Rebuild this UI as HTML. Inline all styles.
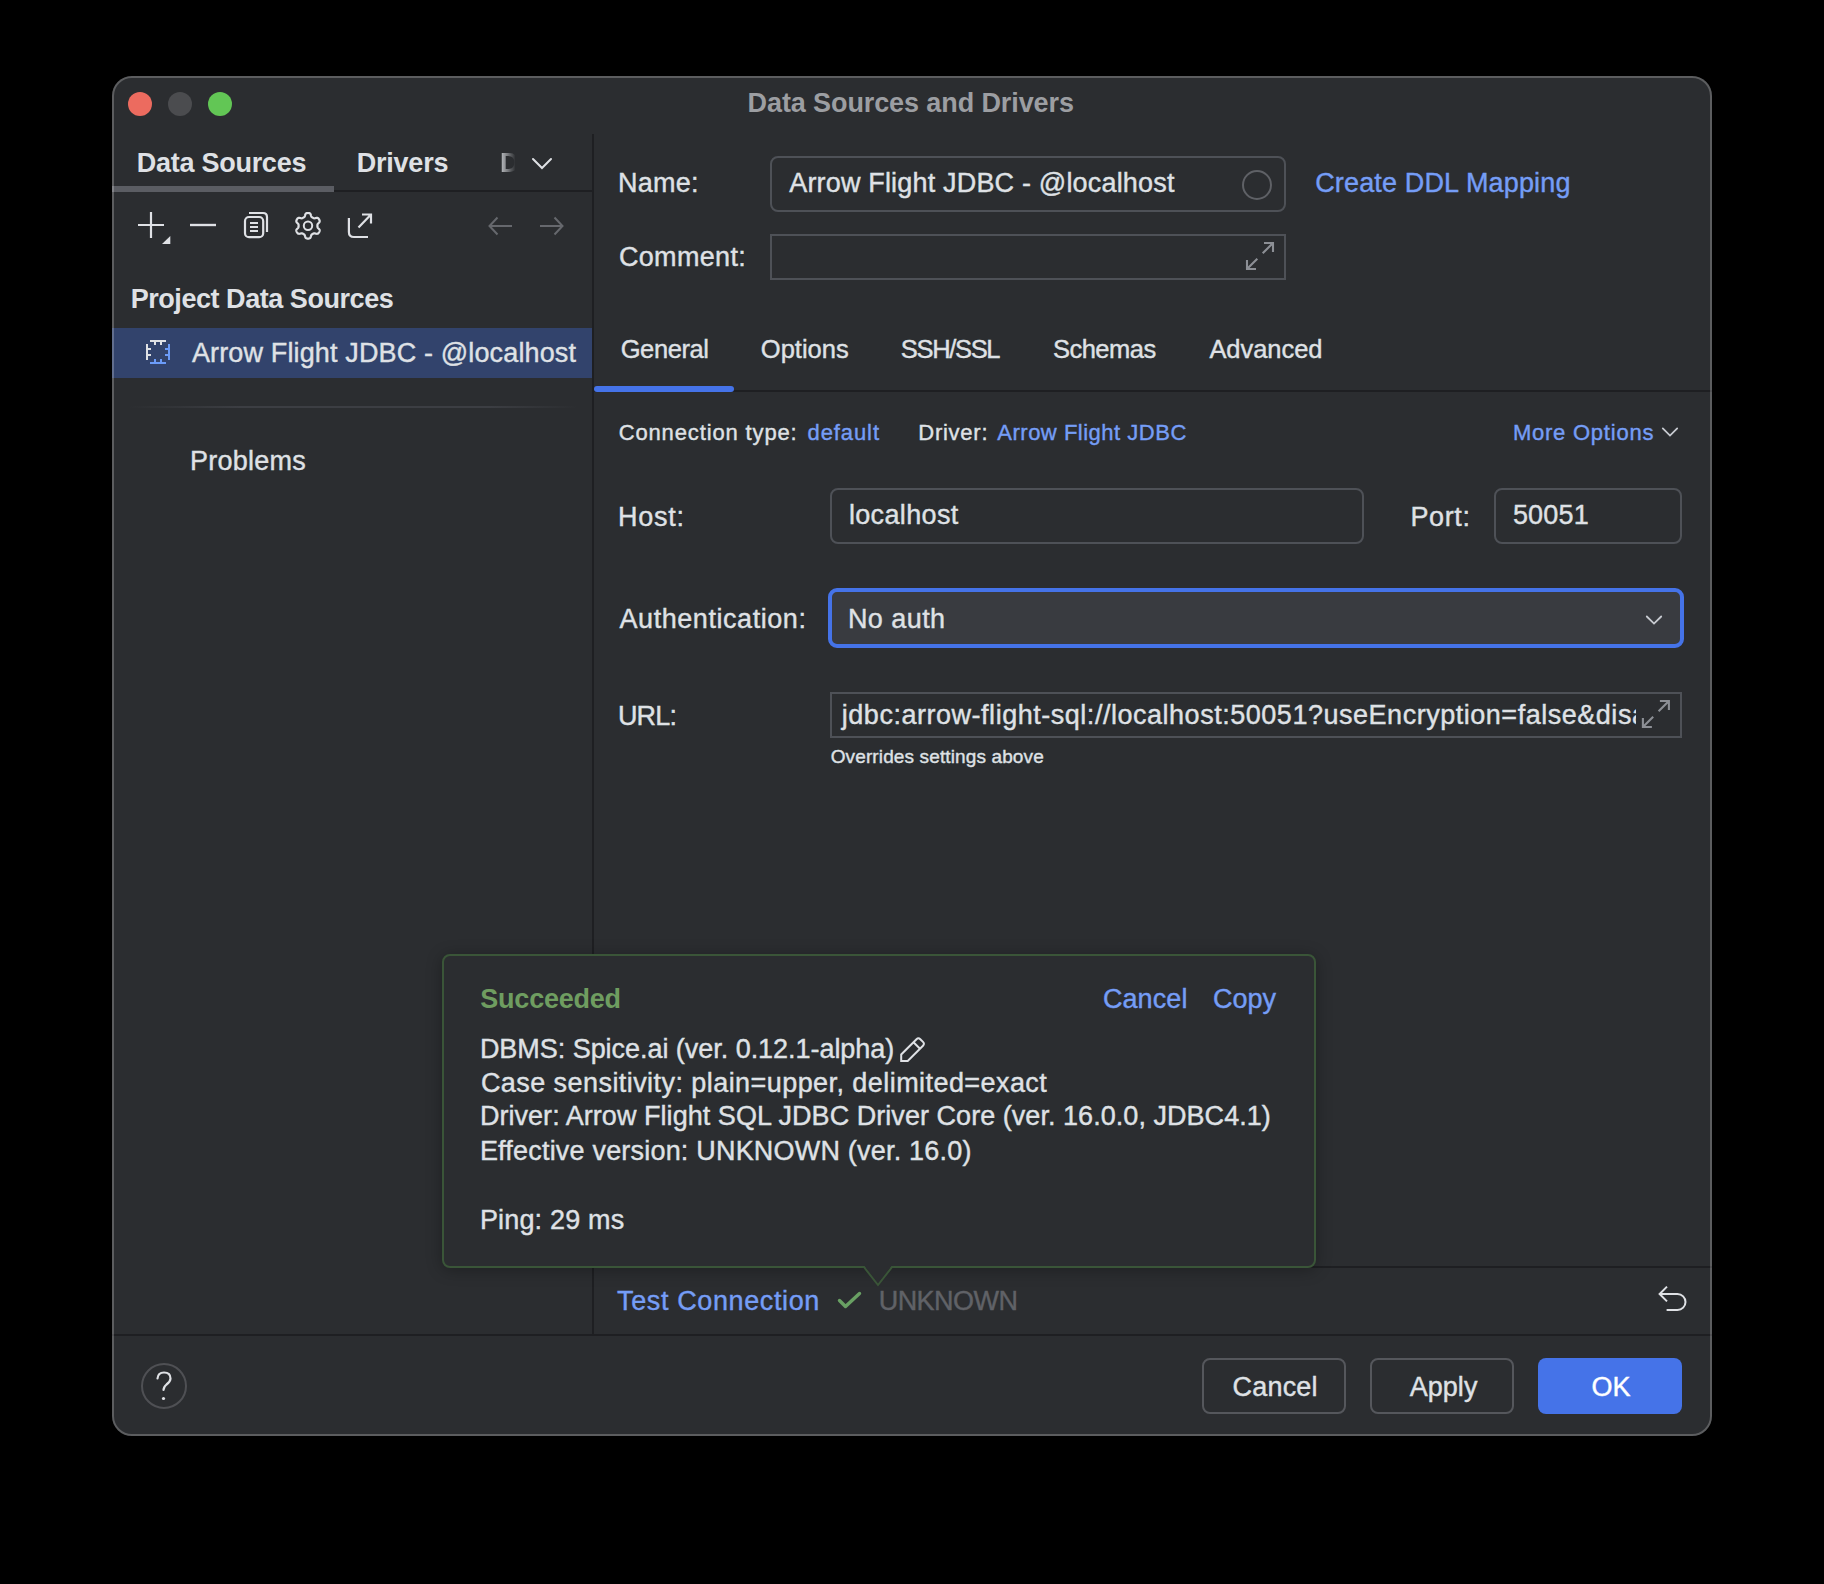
<!DOCTYPE html>
<html><head><meta charset="utf-8">
<style>
html,body{margin:0;padding:0;width:1824px;height:1584px;background:#000;overflow:hidden}
body{position:relative;font-family:"Liberation Sans",sans-serif}
.a{position:absolute;box-sizing:border-box}
.t{position:absolute;white-space:pre;font-family:"Liberation Sans",sans-serif;-webkit-text-stroke:0.4px currentColor}
svg{position:absolute;overflow:visible}
</style></head><body>
<!-- window -->
<div class="a" style="left:112px;top:76px;width:1600px;height:1360px;background:#2b2d30;border-radius:20px"></div>
<!-- traffic lights -->
<div class="a" style="left:128px;top:92px;width:24px;height:24px;border-radius:50%;background:#ec6b5f"></div>
<div class="a" style="left:168px;top:92px;width:24px;height:24px;border-radius:50%;background:#4b4c4f"></div>
<div class="a" style="left:208px;top:92px;width:24px;height:24px;border-radius:50%;background:#62c655"></div>

<!-- sidebar tabs -->
<div class="a" style="left:112px;top:190px;width:480px;height:2px;background:#1e1f22"></div>
<div class="a" style="left:112px;top:186px;width:222px;height:6px;background:#5b5d63"></div>
<!-- faded D -->
<div class="t" style="left:500px;top:150px;font-size:27px;line-height:27px;font-weight:700;-webkit-text-stroke:0;color:#dfe1e5;-webkit-mask-image:linear-gradient(90deg,rgba(0,0,0,0.72) 15%,rgba(0,0,0,0.03) 100%);width:15px;overflow:hidden">D</div>
<svg style="left:530px;top:155px" width="24" height="16" viewBox="530 155 24 16"><path d="M533 159 L542 168 L551 159" fill="none" stroke="#dfe1e5" stroke-width="2" stroke-linecap="round"/></svg>
<!-- vertical divider -->
<div class="a" style="left:592px;top:134px;width:2px;height:1202px;background:#1e1f22"></div>

<!-- toolbar icons -->
<svg style="left:130px;top:205px" width="50" height="45" viewBox="130 205 50 45">
 <path d="M138 225 H164 M151 212 V238" stroke="#dfe1e5" stroke-width="2.2" fill="none"/>
 <path d="M162 244 L170.3 236 V244 Z" fill="#dfe1e5"/>
 <path d="M190 225 H216" stroke="#dfe1e5" stroke-width="2.2" fill="none"/>
</svg>
<svg style="left:185px;top:205px" width="40" height="45" viewBox="185 205 40 45">
 <path d="M190 225 H216" stroke="#dfe1e5" stroke-width="2.2" fill="none"/>
</svg>
<svg style="left:235px;top:205px" width="45" height="45" viewBox="235 205 45 45">
 <rect x="245" y="217" width="18.2" height="20.2" rx="4" stroke="#dfe1e5" stroke-width="2.2" fill="none"/>
 <path d="M249 213 H263 Q267 213 267 217 V232" stroke="#dfe1e5" stroke-width="2.2" fill="none"/>
 <path d="M250 223 H258 M250 227 H258 M250 231 H258" stroke="#dfe1e5" stroke-width="2" fill="none"/>
</svg>
<svg style="left:290px;top:205px" width="40" height="45" viewBox="290 205 40 45">
 <path d="M308.00 213.00 L308.33 213.01 L308.67 213.04 L309.00 213.08 L309.33 213.16 L309.65 213.27 L309.96 213.44 L310.24 213.70 L310.50 214.06 L310.71 214.53 L310.87 215.08 L311.01 215.63 L311.15 216.11 L311.30 216.48 L311.47 216.75 L311.66 216.96 L311.86 217.13 L312.07 217.28 L312.28 217.41 L312.49 217.54 L312.70 217.66 L312.91 217.78 L313.13 217.90 L313.35 218.02 L313.58 218.12 L313.82 218.21 L314.10 218.27 L314.42 218.28 L314.82 218.23 L315.30 218.11 L315.85 217.95 L316.41 217.82 L316.92 217.77 L317.36 217.81 L317.72 217.93 L318.02 218.11 L318.28 218.33 L318.51 218.57 L318.72 218.84 L318.91 219.11 L319.09 219.40 L319.25 219.69 L319.39 220.00 L319.51 220.31 L319.61 220.63 L319.67 220.97 L319.68 221.32 L319.60 221.69 L319.42 222.09 L319.12 222.51 L318.72 222.93 L318.31 223.32 L317.97 223.68 L317.73 224.00 L317.57 224.28 L317.48 224.55 L317.44 224.81 L317.41 225.06 L317.40 225.31 L317.40 225.55 L317.40 225.80 L317.40 226.05 L317.40 226.29 L317.41 226.54 L317.44 226.79 L317.48 227.05 L317.57 227.32 L317.73 227.60 L317.97 227.92 L318.31 228.28 L318.72 228.67 L319.12 229.09 L319.42 229.51 L319.60 229.91 L319.68 230.28 L319.67 230.63 L319.61 230.97 L319.51 231.29 L319.39 231.60 L319.25 231.91 L319.09 232.20 L318.91 232.49 L318.72 232.76 L318.51 233.03 L318.28 233.27 L318.02 233.49 L317.72 233.67 L317.36 233.79 L316.92 233.83 L316.41 233.78 L315.85 233.65 L315.30 233.49 L314.82 233.37 L314.42 233.32 L314.10 233.33 L313.82 233.39 L313.58 233.48 L313.35 233.58 L313.13 233.70 L312.91 233.82 L312.70 233.94 L312.49 234.06 L312.28 234.19 L312.07 234.32 L311.86 234.47 L311.66 234.64 L311.47 234.85 L311.30 235.12 L311.15 235.49 L311.01 235.97 L310.87 236.52 L310.71 237.07 L310.50 237.54 L310.24 237.90 L309.96 238.16 L309.65 238.33 L309.33 238.44 L309.00 238.52 L308.67 238.56 L308.33 238.59 L308.00 238.60 L307.67 238.59 L307.33 238.56 L307.00 238.52 L306.67 238.44 L306.35 238.33 L306.04 238.16 L305.76 237.90 L305.50 237.54 L305.29 237.07 L305.13 236.52 L304.99 235.97 L304.85 235.49 L304.70 235.12 L304.53 234.85 L304.34 234.64 L304.14 234.47 L303.93 234.32 L303.72 234.19 L303.51 234.06 L303.30 233.94 L303.09 233.82 L302.87 233.70 L302.65 233.58 L302.42 233.48 L302.18 233.39 L301.90 233.33 L301.58 233.32 L301.18 233.37 L300.70 233.49 L300.15 233.65 L299.59 233.78 L299.08 233.83 L298.64 233.79 L298.28 233.67 L297.98 233.49 L297.72 233.27 L297.49 233.03 L297.28 232.76 L297.09 232.49 L296.91 232.20 L296.75 231.91 L296.61 231.60 L296.49 231.29 L296.39 230.97 L296.33 230.63 L296.32 230.28 L296.40 229.91 L296.58 229.51 L296.88 229.09 L297.28 228.67 L297.69 228.28 L298.03 227.92 L298.27 227.60 L298.43 227.32 L298.52 227.05 L298.56 226.79 L298.59 226.54 L298.60 226.29 L298.60 226.05 L298.60 225.80 L298.60 225.55 L298.60 225.31 L298.59 225.06 L298.56 224.81 L298.52 224.55 L298.43 224.28 L298.27 224.00 L298.03 223.68 L297.69 223.32 L297.28 222.93 L296.88 222.51 L296.58 222.09 L296.40 221.69 L296.32 221.32 L296.33 220.97 L296.39 220.63 L296.49 220.31 L296.61 220.00 L296.75 219.69 L296.91 219.40 L297.09 219.11 L297.28 218.84 L297.49 218.57 L297.72 218.33 L297.98 218.11 L298.28 217.93 L298.64 217.81 L299.08 217.77 L299.59 217.82 L300.15 217.95 L300.70 218.11 L301.18 218.23 L301.58 218.28 L301.90 218.27 L302.18 218.21 L302.42 218.12 L302.65 218.02 L302.87 217.90 L303.09 217.78 L303.30 217.66 L303.51 217.54 L303.72 217.41 L303.93 217.28 L304.14 217.13 L304.34 216.96 L304.53 216.75 L304.70 216.48 L304.85 216.11 L304.99 215.63 L305.13 215.08 L305.29 214.53 L305.50 214.06 L305.76 213.70 L306.04 213.44 L306.35 213.27 L306.67 213.16 L307.00 213.08 L307.33 213.04 L307.67 213.01 Z" stroke="#dfe1e5" stroke-width="2.2" fill="none"/>
 <circle cx="308" cy="225.8" r="4.2" stroke="#dfe1e5" stroke-width="2" fill="none"/>
</svg>
<svg style="left:340px;top:205px" width="40" height="45" viewBox="340 205 40 45">
 <path d="M348.9 218 V232 Q348.9 237 353.9 237 H368" stroke="#dfe1e5" stroke-width="2.2" fill="none"/>
 <path d="M358.5 227.4 L370.5 215 M362 214.5 H371 V223.6" stroke="#dfe1e5" stroke-width="2.2" fill="none"/>
</svg>
<svg style="left:480px;top:205px" width="95" height="45" viewBox="480 205 95 45">
 <path d="M489.5 226 H512 M497.5 217.5 L489.5 226 L497.5 234.5" stroke="#66686d" stroke-width="2" fill="none"/>
 <path d="M540 226 H562.5 M554.5 217.5 L562.5 226 L554.5 234.5" stroke="#66686d" stroke-width="2" fill="none"/>
</svg>

<!-- Project data sources: selected row -->
<div class="a" style="left:112px;top:328px;width:480px;height:50px;background:#32436c"></div>
<svg style="left:140px;top:330px" width="40" height="40" viewBox="140 330 40 40">
 <path d="M150 341 H166 M155 342 V345 M161 342 V345 M147 344 V360 M148 349 H151 M148 355 H151" stroke="#dfe1e5" stroke-width="2" fill="none"/>
 <path d="M169 344 V360 M168 349 H165 M168 355 H165 M150 363 H166 M155 362 V359 M161 362 V359" stroke="#6b9bf8" stroke-width="2" fill="none"/>
</svg>
<!-- separator in sidebar -->
<div class="a" style="left:128px;top:406px;width:450px;height:2px;background:linear-gradient(90deg,rgba(60,62,67,0) 0%,#3c3e43 25%,#3c3e43 80%,rgba(60,62,67,0) 100%)"></div>

<!-- Name field -->
<div class="a" style="left:770px;top:156px;width:516px;height:56px;border:2px solid #4e5157;border-radius:8px"></div>
<div class="a" style="left:1241.5px;top:169.5px;width:30px;height:30px;border:2px solid #5f6166;border-radius:50%"></div>
<!-- Comment field -->
<div class="a" style="left:770px;top:234px;width:516px;height:46px;border:2px solid #4e5157"></div>
<svg style="left:1240px;top:236px" width="40" height="40" viewBox="1240 236 40 40">
 <path d="M1264.0 243.0 H1273.0 V252.0 M1262.7 253.3 L1273.0 243.0 M1247.0 260.0 V269.0 H1256.0 M1247.0 269.0 L1257.3 258.7" stroke="#8c8f95" stroke-width="2.1" fill="none"/>
</svg>

<!-- tabs -->
<div class="a" style="left:594px;top:390px;width:1118px;height:2px;background:#1e1f22"></div>
<div class="a" style="left:594px;top:386px;width:140px;height:6px;background:#4573e8;border-radius:3px"></div>

<!-- More options chevron -->
<svg style="left:1660px;top:425px" width="20" height="15" viewBox="1660 425 20 15"><path d="M1662.8 428.4 L1670 435.6 L1677.2 428.4" fill="none" stroke="#c8cbd1" stroke-width="1.8" stroke-linecap="round"/></svg>

<!-- Host field -->
<div class="a" style="left:830px;top:488px;width:534px;height:56px;border:2px solid #4e5157;border-radius:8px"></div>
<!-- Port field -->
<div class="a" style="left:1494px;top:488px;width:188px;height:56px;border:2px solid #4e5157;border-radius:8px"></div>

<!-- Auth combo -->
<div class="a" style="left:828px;top:588px;width:856px;height:60px;border:4px solid #4573e8;border-radius:9px;background:#393b40"></div>
<svg style="left:1640px;top:610px" width="30" height="20" viewBox="1640 610 30 20"><path d="M1646.8 616.5 L1654 623.6 L1661.2 616.5" fill="none" stroke="#c8cbd1" stroke-width="1.8" stroke-linecap="round"/></svg>

<!-- URL field -->
<div class="a" style="left:830px;top:692px;width:852px;height:46px;border:2px solid #4e5157"></div>
<!--URLTEXT-->
<div class="a" style="left:1636px;top:694px;width:44px;height:42px;background:#2b2d30;z-index:2"></div>
<svg style="left:1636px;top:694px;z-index:3" width="40" height="40" viewBox="1636 694 40 40">
 <path d="M1659.9 701.0 H1668.9 V710.0 M1658.6 711.3 L1668.9 701.0 M1642.9 718.0 V727.0 H1651.9 M1642.9 727.0 L1653.2 716.7" stroke="#8c8f95" stroke-width="2.1" fill="none"/>
</svg>

<!-- separators bottom -->
<div class="a" style="left:594px;top:1266px;width:1118px;height:2px;background:#1e1f22"></div>
<div class="a" style="left:112px;top:1334px;width:1600px;height:2px;background:#1e1f22"></div>

<!-- check -->
<svg style="left:835px;top:1288px" width="30" height="25" viewBox="835 1288 30 25"><path d="M839.5 1300.5 L845.5 1306.5 L859.5 1293.5" fill="none" stroke="#69a063" stroke-width="3.4" stroke-linecap="round" stroke-linejoin="round"/></svg>
<!-- undo -->
<svg style="left:1650px;top:1280px" width="45" height="40" viewBox="1650 1280 45 40">
 <path d="M1667 1286.6 L1659.6 1294 L1667 1301.4 M1659.6 1294 H1677.5 A8 8 0 0 1 1677.5 1310 H1666.6" fill="none" stroke="#dfe1e5" stroke-width="2"/>
</svg>

<!-- buttons -->
<div class="a" style="left:1202px;top:1358px;width:144px;height:56px;border:2px solid #55575c;border-radius:8px"></div>
<div class="a" style="left:1370px;top:1358px;width:144px;height:56px;border:2px solid #55575c;border-radius:8px"></div>
<div class="a" style="left:1538px;top:1358px;width:144px;height:56px;background:#4573e8;border-radius:8px"></div>
<!-- help -->
<div class="a" style="left:141px;top:1363px;width:46px;height:46px;border:2px solid #4f5054;border-radius:50%"></div>
<svg style="left:150px;top:1370px" width="30" height="35" viewBox="150 1370 30 35">
 <path d="M157.5 1378.5 Q158 1372.5 164 1372.5 Q170.5 1372.5 170.5 1378.5 Q170.5 1381.5 166.5 1384.5 Q163.5 1387 163.5 1390" fill="none" stroke="#dfe1e5" stroke-width="2.2" stroke-linecap="round"/>
 <circle cx="163.5" cy="1398.5" r="1.6" fill="#dfe1e5"/>
</svg>

<!-- popup -->
<div class="a" style="left:442px;top:954px;width:874px;height:314px;background:#2b2d30;border:2px solid #3a5538;border-radius:8px;box-shadow:0 2px 16px rgba(0,0,0,0.3)"></div>
<svg style="left:860px;top:1262px" width="40" height="30" viewBox="860 1262 40 30">
 <path d="M863.5 1265 H892.5 L878 1283.5 Z" fill="#2b2d30"/>
 <path d="M863.5 1266.5 L878 1285 L892.5 1266.5" fill="none" stroke="#3a5538" stroke-width="2"/>
</svg>
<svg style="left:895px;top:1032px" width="35" height="35" viewBox="895 1032 35 35">
 <path d="M901.2 1061 V1054.5 L916.5 1039.2 Q918.4 1037.3 920.3 1039.2 L923 1041.9 Q924.9 1043.8 923 1045.7 L907.7 1061 Z M913.5 1042.2 L920 1048.7" fill="none" stroke="#dfe1e5" stroke-width="2" stroke-linejoin="miter"/>
</svg>

<div class="t" style="left:747.60px;top:89.70px;font-size:27px;line-height:27px;letter-spacing:-0.101px;color:#9c9ea2;font-weight:700;-webkit-text-stroke:0;">Data Sources and Drivers</div>
<div class="t" style="left:136.70px;top:150.00px;font-size:27px;line-height:27px;letter-spacing:-0.260px;color:#dfe1e5;font-weight:700;-webkit-text-stroke:0;">Data Sources</div>
<div class="t" style="left:356.80px;top:150.00px;font-size:27px;line-height:27px;letter-spacing:-0.241px;color:#dfe1e5;font-weight:700;-webkit-text-stroke:0;">Drivers</div>
<div class="t" style="left:130.70px;top:286.20px;font-size:27px;line-height:27px;letter-spacing:-0.452px;color:#dfe1e5;font-weight:700;-webkit-text-stroke:0;">Project Data Sources</div>
<div class="t" style="left:191.90px;top:339.90px;font-size:27px;line-height:27px;letter-spacing:0.141px;color:#dfe1e5;">Arrow Flight JDBC - @localhost</div>
<div class="t" style="left:189.90px;top:448.30px;font-size:27px;line-height:27px;letter-spacing:0.252px;color:#dfe1e5;">Problems</div>
<div class="t" style="left:617.90px;top:170.30px;font-size:27px;line-height:27px;letter-spacing:0.295px;color:#dfe1e5;">Name:</div>
<div class="t" style="left:789.20px;top:170.30px;font-size:27px;line-height:27px;letter-spacing:0.179px;color:#dfe1e5;">Arrow Flight JDBC - @localhost</div>
<div class="t" style="left:1315.20px;top:169.70px;font-size:27px;line-height:27px;letter-spacing:0.152px;color:#759df6;">Create DDL Mapping</div>
<div class="t" style="left:618.90px;top:243.80px;font-size:27px;line-height:27px;letter-spacing:0.338px;color:#dfe1e5;">Comment:</div>
<div class="t" style="left:620.70px;top:337.20px;font-size:25.5px;line-height:25.5px;letter-spacing:-0.409px;color:#dfe1e5;">General</div>
<div class="t" style="left:760.80px;top:337.20px;font-size:25.5px;line-height:25.5px;letter-spacing:0.012px;color:#dfe1e5;">Options</div>
<div class="t" style="left:900.80px;top:337.20px;font-size:25.5px;line-height:25.5px;letter-spacing:-1.339px;color:#dfe1e5;">SSH/SSL</div>
<div class="t" style="left:1052.90px;top:337.20px;font-size:25.5px;line-height:25.5px;letter-spacing:-0.508px;color:#dfe1e5;">Schemas</div>
<div class="t" style="left:1209.40px;top:337.20px;font-size:25.5px;line-height:25.5px;letter-spacing:-0.048px;color:#dfe1e5;">Advanced</div>
<div class="t" style="left:618.65px;top:422.10px;font-size:22px;line-height:22px;letter-spacing:0.864px;color:#dfe1e5;">Connection type:</div>
<div class="t" style="left:807.50px;top:422.10px;font-size:22px;line-height:22px;letter-spacing:0.910px;color:#759df6;">default</div>
<div class="t" style="left:918.30px;top:422.10px;font-size:22px;line-height:22px;letter-spacing:0.739px;color:#dfe1e5;">Driver:</div>
<div class="t" style="left:997.30px;top:422.10px;font-size:22px;line-height:22px;letter-spacing:0.504px;color:#759df6;">Arrow Flight JDBC</div>
<div class="t" style="left:1512.90px;top:421.60px;font-size:22px;line-height:22px;letter-spacing:0.768px;color:#759df6;">More Options</div>
<div class="t" style="left:617.90px;top:504.00px;font-size:27px;line-height:27px;letter-spacing:0.771px;color:#dfe1e5;">Host:</div>
<div class="t" style="left:848.90px;top:502.30px;font-size:27px;line-height:27px;letter-spacing:0.355px;color:#dfe1e5;">localhost</div>
<div class="t" style="left:1410.40px;top:504.00px;font-size:27px;line-height:27px;letter-spacing:0.621px;color:#dfe1e5;">Port:</div>
<div class="t" style="left:1512.90px;top:502.00px;font-size:27px;line-height:27px;letter-spacing:0.209px;color:#dfe1e5;">50051</div>
<div class="t" style="left:619.50px;top:606.10px;font-size:27px;line-height:27px;letter-spacing:0.555px;color:#dfe1e5;">Authentication:</div>
<div class="t" style="left:847.90px;top:606.00px;font-size:27px;line-height:27px;letter-spacing:0.442px;color:#dfe1e5;">No auth</div>
<div class="t" style="left:617.90px;top:702.60px;font-size:27px;line-height:27px;letter-spacing:-0.804px;color:#dfe1e5;">URL:</div>
<div class="t" style="left:830.70px;top:746.50px;font-size:19px;line-height:19px;letter-spacing:0.126px;color:#dfe1e5;">Overrides settings above</div>
<div class="t" style="left:480.30px;top:986.00px;font-size:27px;line-height:27px;letter-spacing:-0.222px;color:#6f9d60;font-weight:700;-webkit-text-stroke:0;">Succeeded</div>
<div class="t" style="left:1102.90px;top:985.80px;font-size:27px;line-height:27px;letter-spacing:0.091px;color:#759df6;">Cancel</div>
<div class="t" style="left:1212.90px;top:985.80px;font-size:27px;line-height:27px;letter-spacing:0.056px;color:#759df6;">Copy</div>
<div class="t" style="left:479.90px;top:1035.60px;font-size:27px;line-height:27px;letter-spacing:-0.039px;color:#dfe1e5;">DBMS: Spice.ai (ver. 0.12.1-alpha)</div>
<div class="t" style="left:480.90px;top:1069.80px;font-size:27px;line-height:27px;letter-spacing:0.436px;color:#dfe1e5;">Case sensitivity: plain=upper, delimited=exact</div>
<div class="t" style="left:479.90px;top:1103.30px;font-size:27px;line-height:27px;letter-spacing:0.043px;color:#dfe1e5;">Driver: Arrow Flight SQL JDBC Driver Core (ver. 16.0.0, JDBC4.1)</div>
<div class="t" style="left:479.90px;top:1137.50px;font-size:27px;line-height:27px;letter-spacing:0.199px;color:#dfe1e5;">Effective version: UNKNOWN (ver. 16.0)</div>
<div class="t" style="left:479.90px;top:1206.50px;font-size:27px;line-height:27px;letter-spacing:0.173px;color:#dfe1e5;">Ping: 29 ms</div>
<div class="t" style="left:617.10px;top:1288.00px;font-size:27px;line-height:27px;letter-spacing:0.614px;color:#759df6;">Test Connection</div>
<div class="t" style="left:878.70px;top:1287.80px;font-size:27px;line-height:27px;letter-spacing:-0.548px;color:#606267;">UNKNOWN</div>
<div class="t" style="left:1232.60px;top:1374.00px;font-size:27px;line-height:27px;letter-spacing:0.171px;color:#dfe1e5;">Cancel</div>
<div class="t" style="left:1409.70px;top:1374.00px;font-size:27px;line-height:27px;letter-spacing:0.040px;color:#dfe1e5;">Apply</div>
<div class="t" style="left:1591.40px;top:1374.00px;font-size:27px;line-height:27px;letter-spacing:0.000px;color:#ffffff;">OK</div>
<div class="t" style="left:841.80px;top:702.00px;font-size:27px;line-height:27px;letter-spacing:0.523px;color:#dfe1e5;">jdbc:arrow-flight-sql://localhost:50051?useEncryption=false&amp;disa</div>
<div class="a" style="left:112px;top:76px;width:1600px;height:1360px;border:2px solid rgba(255,255,255,0.23);border-radius:20px;z-index:10"></div>
</body></html>
